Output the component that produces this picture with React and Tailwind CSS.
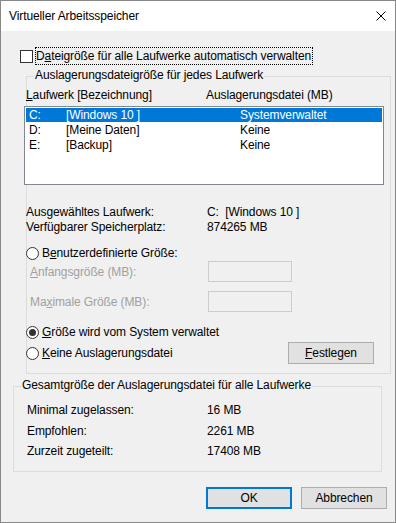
import React from 'react';

const Radio = ({ checked }) => (
  <span className="w-[13px] h-[13px] rounded-full border border-[#333] bg-white flex items-center justify-center shrink-0">
    {checked && <span className="w-[7px] h-[7px] rounded-full bg-[#333]" />}
  </span>
);

const GroupBox = ({ title, titleLeft, className, children }) => (
  <div className={`relative border border-[#dcdcdc] ${className}`}>
    <span className={`absolute -top-[9px] ${titleLeft} px-[1px] bg-[#f0f0f0] leading-[15px] whitespace-nowrap`}>
      {title}
    </span>
    {children}
  </div>
);

const drives = [
  { letter: 'C:', label: '[Windows 10 ]', size: 'Systemverwaltet', selected: true },
  { letter: 'D:', label: '[Meine Daten]', size: 'Keine' },
  { letter: 'E:', label: '[Backup]', size: 'Keine' }
];

const totals = [
  ['Minimal zugelassen:', '16 MB'],
  ['Empfohlen:', '2261 MB'],
  ['Zurzeit zugeteilt:', '17408 MB']
];

export default function App() {
  return (
    <div
      className="w-[396px] h-[523px] border border-[#888] bg-[#f0f0f0] flex flex-col text-[12px] tracking-[-0.1px] text-black overflow-hidden"
      style={{ fontFamily: '"Liberation Sans", Arial, sans-serif' }}
    >
      {/* title bar */}
      <div className="h-[30px] bg-white flex items-center justify-between pl-[8px] pr-[9px] shrink-0">
        <span className="leading-[16px]">Virtueller Arbeitsspeicher</span>
        <svg width="10" height="10" viewBox="0 0 10 10">
          <path d="M0.5 0.5 L9.5 9.5 M9.5 0.5 L0.5 9.5" stroke="#000" strokeWidth="1" fill="none" />
        </svg>
      </div>

      {/* auto checkbox */}
      <div className="mt-[16px] ml-[19px] h-[18px] flex items-center">
        <span className="w-[13px] h-[13px] border border-[#333] bg-white shrink-0" />
        <span className="ml-[2px] border border-dotted border-black pr-[1px] leading-[16px] whitespace-nowrap">
          D<u>a</u>teigröße für alle Laufwerke automatisch verwalten
        </span>
      </div>

      {/* per drive group */}
      <GroupBox
        title="Auslagerungsdateigröße für jedes Laufwerk"
        titleLeft="left-[7px]"
        className="mt-[11px] ml-[25px] w-[365px] h-[298px] shrink-0"
      >
        <div className="mt-[10px] -ml-px flex leading-[16px]">
          <span className="w-[180px]"><u>L</u>aufwerk [Bezeichnung]</span>
          <span>Auslagerungsdatei (MB)</span>
        </div>

        <div className="mt-[3px] -ml-[3px] w-[360px] h-[79px] border border-[#828790] bg-white pt-[1px] px-px flex flex-col gap-px">
          {drives.map((d) => (
            <div
              key={d.letter}
              className={`h-[14px] flex items-center pl-[3px] leading-[14px] ${d.selected ? 'bg-[#0078d7] text-white' : ''}`}
            >
              <span className="w-[37px]">{d.letter}</span>
              <span className="w-[174px]">{d.label}</span>
              <span>{d.size}</span>
            </div>
          ))}
        </div>

        <div className="mt-[20px] -ml-px flex flex-col leading-[15px]">
          <div className="flex">
            <span className="w-[181px]">Ausgewähltes Laufwerk:</span>
            <span>C:&nbsp;&nbsp;[Windows 10 ]</span>
          </div>
          <div className="flex">
            <span className="w-[181px]">Verfügbarer Speicherplatz:</span>
            <span>874265 MB</span>
          </div>
        </div>

        <div className="mt-[10px] -ml-px h-[16px] flex items-center">
          <Radio />
          <span className="ml-[3px] leading-[16px]">B<u>e</u>nutzerdefinierte Größe:</span>
        </div>

        <div className="flex items-center h-[21px] text-[#a0a0a0]">
          <span className="ml-[3px] w-[178px]"><u>A</u>nfangsgröße (MB):</span>
          <span className="w-[84px] h-[21px] border border-[#cccccc]" />
        </div>

        <div className="mt-[9px] flex items-center h-[21px] text-[#a0a0a0]">
          <span className="ml-[3px] w-[178px]">Ma<u>x</u>imale Größe (MB):</span>
          <span className="w-[84px] h-[21px] border border-[#cccccc]" />
        </div>

        <div className="mt-[12px] -ml-px h-[16px] flex items-center">
          <Radio checked />
          <span className="ml-[3px] leading-[16px]"><u>G</u>röße wird vom System verwaltet</span>
        </div>

        <div className="mt-[2px] -ml-px h-[22px] flex items-center justify-between pr-[16px]">
          <div className="flex items-center">
            <Radio />
            <span className="ml-[3px] leading-[16px]"><u>K</u>eine Auslagerungsdatei</span>
          </div>
          <button className="w-[86px] h-[22px] border border-[#adadad] bg-[#e1e1e1] leading-[16px]">
            <u>F</u>estlegen
          </button>
        </div>
      </GroupBox>

      {/* totals group */}
      <GroupBox
        title="Gesamtgröße der Auslagerungsdatei für alle Laufwerke"
        titleLeft="left-[7px]"
        className="mt-[12px] ml-[12px] w-[369px] h-[86px] shrink-0"
      >
        <div className="pt-[13px] pl-[13px] flex flex-col">
          {totals.map(([k, v]) => (
            <div key={k} className="flex h-[20.5px] items-center leading-[16px]">
              <span className="w-[180px]">{k}</span>
              <span>{v}</span>
            </div>
          ))}
        </div>
      </GroupBox>

      {/* buttons */}
      <div className="mt-[15px] flex justify-end gap-[9px] pr-[8px]">
        <button className="w-[86px] h-[22px] border-2 border-[#0078d7] bg-[#e1e1e1] leading-[16px]">OK</button>
        <button className="w-[86px] h-[22px] border border-[#adadad] bg-[#e1e1e1] leading-[16px]">Abbrechen</button>
      </div>
    </div>
  );
}
